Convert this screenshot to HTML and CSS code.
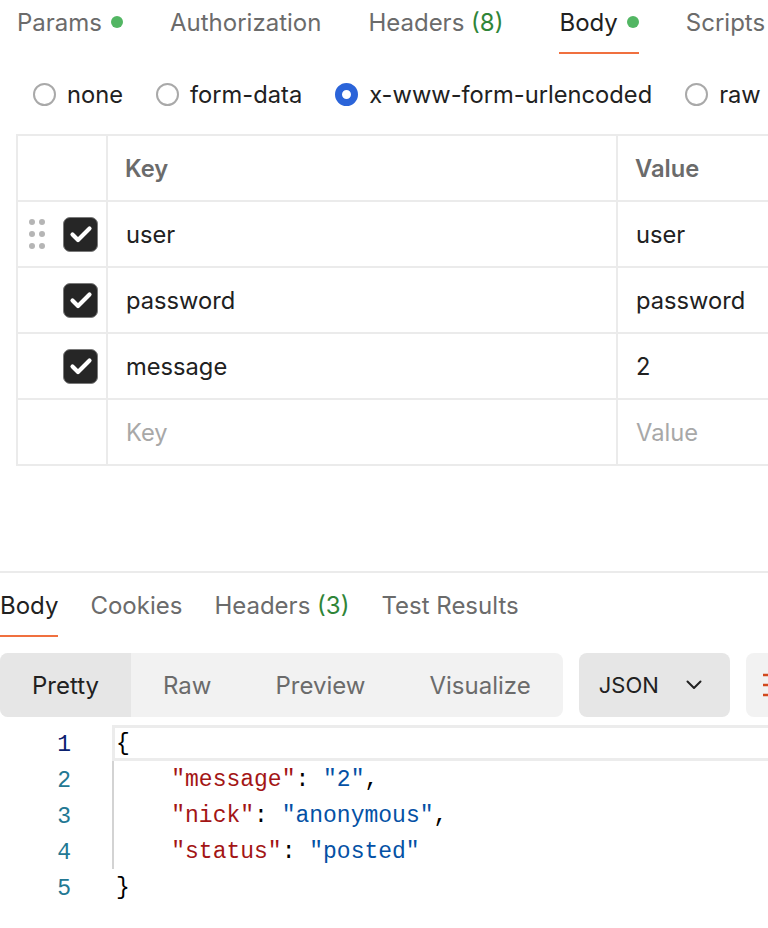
FILE: index.html
```html
<!DOCTYPE html>
<html>
<head>
<meta charset="utf-8">
<link rel="stylesheet" href="styles.css">
</head>
<body>
<div class="page">
  <nav class="tabs">
    <div class="tab">Params<span class="dot"></span></div>
    <div class="tab">Authorization</div>
    <div class="tab wide">Headers&nbsp;<span class="count">(8)</span></div>
    <div class="tab active">Body<span class="dot"></span></div>
    <div class="tab">Scripts</div>
  </nav>

  <div class="radios">
    <div class="radio"><span class="circle"></span>none</div>
    <div class="radio"><span class="circle"></span>form-data</div>
    <div class="radio"><span class="circle on"></span>x-www-form-urlencoded</div>
    <div class="radio"><span class="circle"></span>raw</div>
  </div>

  <div class="kv">
    <div class="cell c0"></div>
    <div class="cell head">Key</div>
    <div class="cell head">Value</div>

    <div class="cell c0">
      <span class="grip"><i></i><i></i><i></i><i></i><i></i><i></i></span>
      <span class="cb"><svg width="34" height="34" viewBox="0 0 34 34"><path d="M8.5 17.5 L14 23 L25.5 11.5" fill="none" stroke="#fff" stroke-width="4.2" stroke-linecap="round" stroke-linejoin="round"/></svg></span>
    </div>
    <div class="cell">user</div>
    <div class="cell">user</div>

    <div class="cell c0">
      <span class="cb"><svg width="34" height="34" viewBox="0 0 34 34"><path d="M8.5 17.5 L14 23 L25.5 11.5" fill="none" stroke="#fff" stroke-width="4.2" stroke-linecap="round" stroke-linejoin="round"/></svg></span>
    </div>
    <div class="cell">password</div>
    <div class="cell">password</div>

    <div class="cell c0">
      <span class="cb"><svg width="34" height="34" viewBox="0 0 34 34"><path d="M8.5 17.5 L14 23 L25.5 11.5" fill="none" stroke="#fff" stroke-width="4.2" stroke-linecap="round" stroke-linejoin="round"/></svg></span>
    </div>
    <div class="cell">message</div>
    <div class="cell">2</div>

    <div class="cell c0"></div>
    <div class="cell ph">Key</div>
    <div class="cell ph">Value</div>
  </div>

  <section class="response">
    <nav class="rtabs">
      <div class="rtab active">Body</div>
      <div class="rtab">Cookies</div>
      <div class="rtab">Headers&nbsp;<span class="count">(3)</span></div>
      <div class="rtab">Test Results</div>
    </nav>

    <div class="toolbar">
      <div class="segmented">
        <div class="seg on">Pretty</div>
        <div class="seg">Raw</div>
        <div class="seg">Preview</div>
        <div class="seg">Visualize</div>
      </div>
      <div class="select">JSON
        <svg width="16" height="10" viewBox="0 0 16 10"><path d="M1.5 1.5 L8 8 L14.5 1.5" fill="none" stroke="#212121" stroke-width="2" stroke-linecap="round" stroke-linejoin="round"/></svg>
      </div>
      <div class="wrapbtn">
        <svg width="22" height="26" viewBox="0 0 22 26"><path d="M0 3 H22 M0 13 H22 M0 23 H22" stroke="#d2491d" stroke-width="2.4"/></svg>
      </div>
    </div>

    <div class="editor">
      <div class="gutter">
        <div class="ln cur">1</div>
        <div class="ln">2</div>
        <div class="ln">3</div>
        <div class="ln">4</div>
        <div class="ln">5</div>
      </div>
      <div class="code">
        <div class="line active">{</div>
        <div class="guide">
          <div class="line">    <span class="k">"message"</span>: <span class="s">"2"</span>,</div>
          <div class="line">    <span class="k">"nick"</span>: <span class="s">"anonymous"</span>,</div>
          <div class="line">    <span class="k">"status"</span>: <span class="s">"posted"</span></div>
        </div>
        <div class="line last">}</div>
      </div>
    </div>
  </section>
</div>
</body>
</html>
```

FILE: styles.css
```css
html, body {
  margin: 0;
  padding: 0;
  background: #ffffff;
}

body {
  width: 768px;
  height: 928px;
  overflow: hidden;
  font-family: Inter, "Noto Sans", "Liberation Sans", sans-serif;
  color: #212121;
}

.page {
  width: 768px;
  white-space: nowrap;
}

/* request tabs */
.tabs {
  display: flex;
  gap: 47px;
  padding-left: 17px;
}

.tab {
  display: flex;
  align-items: center;
  height: 44px;
  padding-bottom: 8px;
  border-bottom: 2px solid transparent;
  font-size: 24px;
  color: #6b6b6b;
  flex-shrink: 0;
}

.tab.wide {
  margin-right: 9px;
}

.tab.active {
  color: #212121;
  border-bottom-color: #f0703f;
}

.dot {
  width: 12px;
  height: 12px;
  border-radius: 50%;
  background: #52b663;
  margin-left: 9px;
}

.count {
  color: #2f8538;
}

/* body type radios */
.radios {
  display: flex;
  align-items: center;
  gap: 33px;
  height: 40px;
  margin-top: 20px;
  padding-left: 33px;
  font-size: 23.7px;
  color: #212121;
}

.radio {
  display: flex;
  align-items: center;
  gap: 11px;
  flex-shrink: 0;
}

.circle {
  width: 23px;
  height: 23px;
  box-sizing: border-box;
  border: 2px solid #a9a9a9;
  border-radius: 50%;
}

.circle.on {
  border: 7px solid #2b64d9;
}

/* key/value table */
.kv {
  display: grid;
  grid-template-columns: 90px 510px 300px;
  width: max-content;
  margin: 20px 0 0 16px;
  border-left: 2px solid #ebebeb;
  border-top: 2px solid #ebebeb;
  font-size: 23.7px;
}

.cell {
  box-sizing: border-box;
  height: 66px;
  display: flex;
  align-items: center;
  padding-left: 18px;
  border-right: 2px solid #ebebeb;
  border-bottom: 2px solid #ebebeb;
  color: #212121;
}

.cell.head {
  padding-left: 17px;
  font-weight: 600;
  color: #6b6b6b;
}

.cell.ph {
  color: #a8a8a8;
}

.cell.c0 {
  padding-left: 11px;
  padding-right: 8px;
}

.grip {
  display: grid;
  grid-template-columns: 6px 6px;
  column-gap: 4px;
  row-gap: 6px;
}

.grip i {
  display: block;
  width: 6px;
  height: 6px;
  border-radius: 50%;
  background: #b5b5b5;
}

.cb {
  margin-left: auto;
  width: 35px;
  height: 35px;
  box-sizing: border-box;
  border: 1.5px solid #7a7a7a;
  border-radius: 7px;
  background: #262626;
  display: flex;
  align-items: center;
  justify-content: center;
  overflow: hidden;
}

.cb svg {
  flex-shrink: 0;
}

/* response */
.response {
  margin-top: 105px;
  border-top: 2px solid #ebebeb;
}

.rtabs {
  display: flex;
  gap: 32px;
  padding-top: 2px;
}

.rtab {
  display: flex;
  align-items: center;
  height: 60px;
  border-bottom: 2px solid transparent;
  font-size: 24px;
  color: #6b6b6b;
  flex-shrink: 0;
}

.rtab.active {
  color: #212121;
  border-bottom-color: #f0703f;
}

.toolbar {
  display: flex;
  gap: 16px;
  margin-top: 16px;
  height: 64px;
  font-size: 24px;
}

.segmented {
  display: flex;
  background: #f2f2f2;
  border-radius: 8px;
  flex-shrink: 0;
}

.seg {
  display: flex;
  align-items: center;
  padding: 0 32px;
  color: #6b6b6b;
}

.seg.on {
  background: #e6e6e6;
  color: #212121;
  border-radius: 8px 0 0 8px;
}

.select {
  display: flex;
  align-items: center;
  gap: 27px;
  padding: 0 28px 0 20px;
  background: #e6e6e6;
  border-radius: 8px;
  color: #212121;
  font-size: 22px;
  flex-shrink: 0;
}

.wrapbtn {
  display: flex;
  align-items: center;
  width: 60px;
  padding-left: 17px;
  background: #f2f2f2;
  border-radius: 8px;
  flex-shrink: 0;
}

/* editor */
.editor {
  display: flex;
  margin-top: 8px;
  font-family: "Liberation Mono", "DejaVu Sans Mono", monospace;
  font-size: 23px;
}

.gutter {
  width: 112px;
  box-sizing: border-box;
  padding-right: 41px;
  text-align: right;
  flex-shrink: 0;
}

.ln {
  box-sizing: border-box;
  height: 36px;
  line-height: 36px;
  padding-top: 2px;
  color: #237893;
}

.ln.cur {
  color: #0b216f;
}

.code {
  flex: 1;
  color: #000000;
}

.line {
  box-sizing: border-box;
  height: 36px;
  line-height: 34px;
  padding-top: 2px;
  padding-left: 2px;
  white-space: pre;
}

.line.active {
  border: 3px solid #ececec;
  border-right: none;
  line-height: 30px;
  padding-top: 1px;
  padding-left: 1px;
}

.guide {
  border-left: 2px solid #d3d3d3;
}

.line.last {
  padding-left: 4px;
}

.k {
  color: #a31515;
}

.s {
  color: #0451a5;
}
```
